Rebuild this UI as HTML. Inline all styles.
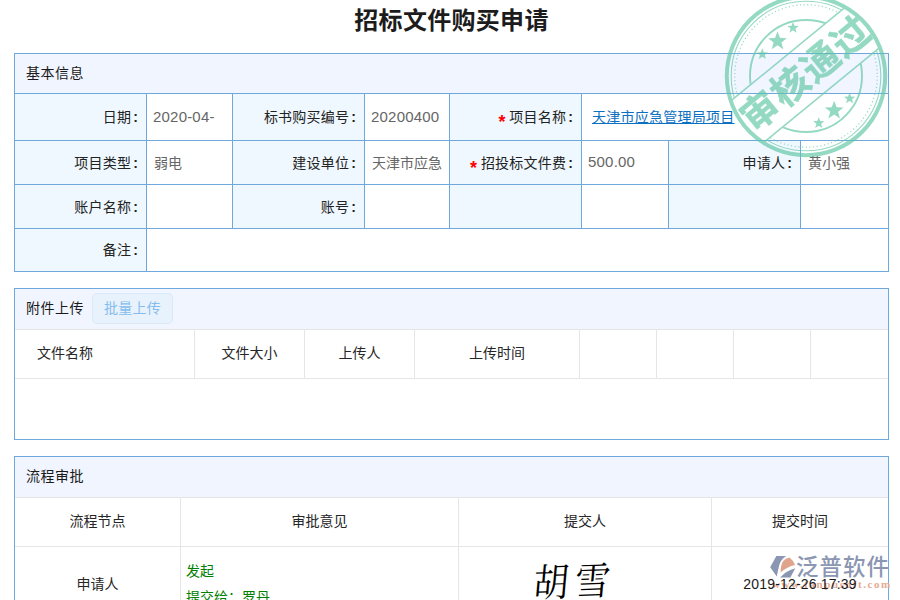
<!DOCTYPE html>
<html lang="zh-CN">
<head>
<meta charset="utf-8">
<title>招标文件购买申请</title>
<style>
html,body{margin:0;padding:0;}
body{width:900px;height:600px;overflow:hidden;background:#fff;position:relative;
 font-family:"Liberation Sans","Noto Sans CJK SC",sans-serif;font-size:14px;color:#1a1a1a;}
h1{position:absolute;left:14px;top:5px;width:875px;margin:0;text-align:center;font-size:24px;line-height:32px;font-weight:bold;color:#1c1c1c;letter-spacing:.3px;}
.sec{position:absolute;left:14px;width:875px;box-sizing:border-box;border:1px solid #6fa8dc;background:#fff;}
.sec .hd{height:39px;line-height:39px;background:#f0f5ff;padding-left:11px;letter-spacing:.5px;box-sizing:border-box;}
table{border-collapse:separate;border-spacing:0;table-layout:fixed;}
td,th{box-sizing:border-box;padding:0;font-weight:normal;overflow:hidden;white-space:nowrap;}
/* section 1 */
#s1{top:53px;height:219px;}
#s1 table{width:873px;border-top:1px solid #6fa8dc;}
#s1 td{border-right:1px solid #6fa8dc;border-bottom:1px solid #6fa8dc;}
#s1 td:last-child{border-right:none;}
#s1 tr:last-child td{border-bottom:none;}
#s1 td.l{background:#f0f8ff;text-align:right;padding-right:8px;padding-bottom:2px;color:#222;letter-spacing:.2px;}
#s1 td.v{background:#fff;text-align:left;padding-left:7px;padding-bottom:2px;color:#666;}
.req{color:#f00;font-weight:bold;font-size:18px;line-height:14px;display:inline-block;position:relative;top:6px;margin-right:3.7px;}
.c{margin-left:2px;}
.n{font-size:15px;padding-left:6px !important;letter-spacing:.2px;}
a{color:#0b6fc2;text-decoration:underline;letter-spacing:.25px;}

/* section 2 / 3 */
#s2{top:288px;height:152px;}
#s3{top:456px;height:200px;}
.sec .hd2{height:41px;line-height:38px;background:#f0f5ff;padding-left:11px;letter-spacing:.5px;box-sizing:border-box;border-bottom:1px solid #e6e6e6;}
.g td{border-right:1px solid #e6e6e6;border-bottom:1px solid #e6e6e6;text-align:center;color:#262626;}
.g td:last-child{border-right:none;}
.g{width:873px;}
.btn{display:inline-block;vertical-align:top;margin:4px 0 0 8px;width:81px;height:31px;line-height:29px;box-sizing:border-box;border:1px solid #d9e9f8;border-radius:5px;background:#e8f2fc;color:#85bdee;text-align:center;letter-spacing:.3px;}
.g td.grn{color:#008000;text-align:left !important;padding-left:5px !important;line-height:25px;vertical-align:top;}
.dt{letter-spacing:.18px;color:#1a1a1a;position:relative;top:1px;z-index:2;}

#wm{position:absolute;left:0;top:0;width:900px;height:600px;pointer-events:none;}
.wmt{position:absolute;left:796px;top:552px;font-size:22.5px;line-height:32px;letter-spacing:1px;color:#8b96b3;white-space:nowrap;font-weight:500;}
.wmu{position:absolute;left:772px;top:576.5px;font-family:"Liberation Serif",serif;font-weight:bold;font-size:11px;line-height:14px;letter-spacing:1.58px;color:#e5a993;white-space:nowrap;}
.sig{position:absolute;left:516px;top:101px;font-family:"Liberation Serif","Noto Serif CJK SC",serif;font-weight:400;font-size:39px;line-height:52px;letter-spacing:7px;color:#000;white-space:nowrap;transform:skewX(-7deg) rotate(-2deg) scaleX(.9);transform-origin:left bottom;}
.h3 td{padding-bottom:4px;}
.h2 td{padding-bottom:4px;}
</style>
</head>
<body>
<h1>招标文件购买申请</h1>

<div class="sec" id="s1">
 <div class="hd">基本信息</div>
 <table>
  <colgroup><col style="width:132px"><col style="width:86px"><col style="width:132px"><col style="width:85px"><col style="width:132px"><col style="width:87px"><col style="width:132px"><col style="width:87px"></colgroup>
  <tr style="height:47px"><td class="l">日期<b class="c">:</b></td><td class="v n">2020-04-</td><td class="l">标书购买编号<b class="c">:</b></td><td class="v n">20200400</td><td class="l"><span class="req">*</span>项目名称<b class="c">:</b></td><td class="v" colspan="3" style="padding-left:10px"><a>天津市应急管理局项目</a></td></tr>
  <tr style="height:44px"><td class="l">项目类型<b class="c">:</b></td><td class="v">弱电</td><td class="l">建设单位<b class="c">:</b></td><td class="v">天津市应急</td><td class="l"><span class="req">*</span>招投标文件费<b class="c">:</b></td><td class="v n">500.00</td><td class="l">申请人<b class="c">:</b></td><td class="v">黄小强</td></tr>
  <tr style="height:44px"><td class="l">账户名称<b class="c">:</b></td><td class="v"></td><td class="l">账号<b class="c">:</b></td><td class="v"></td><td class="l"></td><td class="v"></td><td class="l"></td><td class="v"></td></tr>
  <tr style="height:42px"><td class="l">备注<b class="c">:</b></td><td class="v" colspan="7"></td></tr>
 </table>
</div>


<div class="sec" id="s2">
 <div class="hd2">附件上传<span class="btn">批量上传</span></div>
 <table class="g">
  <colgroup><col style="width:180px"><col style="width:110px"><col style="width:110px"><col style="width:165px"><col style="width:77px"><col style="width:77px"><col style="width:77px"><col style="width:77px"></colgroup>
  <tr class="h2" style="height:49px"><td style="text-align:left;padding-left:22px">文件名称</td><td>文件大小</td><td>上传人</td><td>上传时间</td><td></td><td></td><td></td><td></td></tr>
 </table>
</div>

<div class="sec" id="s3">
 <div class="hd2">流程审批</div>
 <table class="g">
  <colgroup><col style="width:166px"><col style="width:278px"><col style="width:253px"><col style="width:176px"></colgroup>
  <tr class="h3" style="height:49px"><td>流程节点</td><td>审批意见</td><td>提交人</td><td>提交时间</td></tr>
  <tr style="height:72px"><td>申请人</td><td class="grn"><div style="margin-top:12px">发起</div><div style="margin-top:1px">提交给：罗丹</div></td><td><span class="sig">胡雪</span></td><td><span class="dt">2019-12-26 17:39</span></td></tr>
 </table>
</div>


<div id="wm">
<svg width="40" height="33" viewBox="0 0 40 33" style="position:absolute;left:765px;top:550px">
  <path d="M11.3 6.1 L21.2 6.1 Q16.0 9.4 14.3 14.9 Q12.9 20.4 11.8 26.4 L5.2 17.3 Z" fill="#8b96b3"/>
  <path d="M15.7 22.6 Q15.4 15.4 18.2 11.0 Q21.5 7.7 24.5 7.4 Q28.6 10.5 30.1 15.0 Q22.0 16.5 15.7 22.6 Z" fill="#e0a48c"/>
  <path d="M15.1 27.5 L25.3 27.5 L30.3 18.2 Q21.5 20.4 15.1 27.5 Z" fill="#8b96b3"/>
</svg>
 <div class="wmt">泛普软件</div>
 <div class="wmu">www.fanpusoft.com</div>
</div>
<svg id="stamp" width="170" height="170" viewBox="0 0 170 170" style="position:absolute;left:721px;top:-9px;opacity:.66;pointer-events:none">
 <defs><mask id="bm"><rect x="-20" y="-20" width="210" height="210" fill="#fff"/><rect x="-20" y="56.7" width="210" height="52.9" fill="#000" transform="rotate(-39.3 85 85)"/></mask></defs>
 <g fill="none" stroke="#5ec6a4">
  <circle cx="85" cy="85" r="79.2" stroke-width="4"/>
  <g mask="url(#bm)">
   <circle cx="85" cy="85" r="74.8" stroke-width="1.1"/>
   <circle cx="85" cy="85" r="71.3" stroke-width="1.3" stroke-dasharray="1.1 2.6"/>
   <circle cx="85" cy="85" r="56" stroke-width="1.9"/>
  </g>
 </g>
 <g transform="rotate(-39.3 85 85)" fill="#5ec6a4">
  <rect x="11" y="55.9" width="148" height="1.6"/>
  <rect x="10" y="108.8" width="150" height="1.6"/>
  <polygon points="91.2,32.4 89.0,39.0 94.1,43.6 87.2,43.5 84.4,49.8 82.4,43.2 75.5,42.5 81.2,38.5 79.7,31.8 85.2,35.9"/><polygon points="68.8,35.9 67.4,39.9 70.6,42.7 66.4,42.6 64.7,46.5 63.4,42.5 59.2,42.0 62.7,39.6 61.8,35.5 65.1,38.0"/><polygon points="109.3,34.9 107.9,38.9 111.1,41.7 106.9,41.6 105.2,45.5 103.9,41.5 99.7,41.0 103.2,38.6 102.3,34.5 105.6,37.0"/><polygon points="91.2,121.9 89.0,128.5 94.1,133.1 87.2,133.0 84.4,139.3 82.4,132.7 75.5,132.0 81.2,128.0 79.7,121.3 85.2,125.4"/><polygon points="68.8,124.9 67.4,128.9 70.6,131.7 66.4,131.6 64.7,135.5 63.4,131.5 59.2,131.0 62.7,128.6 61.8,124.5 65.1,127.0"/><polygon points="108.3,125.4 106.9,129.4 110.1,132.2 105.9,132.1 104.2,136.0 102.9,132.0 98.7,131.5 102.2,129.1 101.3,125.0 104.6,127.5"/>
  <text x="86.5" y="96.5" text-anchor="middle" font-family="'Liberation Sans','Noto Sans CJK SC',sans-serif" font-weight="700" font-size="37.5" letter-spacing="1.5" stroke="#5ec6a4" stroke-width="0.5" stroke-linejoin="round">审核通过</text>
 </g>
</svg>
</body>
</html>
